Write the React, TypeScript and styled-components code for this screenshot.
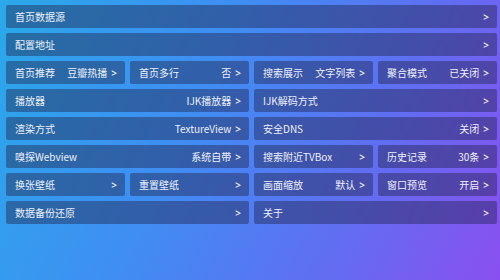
import React from "react";
import styled, { createGlobalStyle } from "styled-components";

const Global = createGlobalStyle`
  html, body { margin: 0; padding: 0; }
  body {
    width: 500px;
    height: 280px;
    overflow: hidden;
    font-family: "Noto Sans CJK SC", "Noto Sans", sans-serif;
  }
`;

const Screen = styled.div`
  width: 500px;
  height: 280px;
  box-sizing: border-box;
  padding: 5px 3px 0 6px;
  background: linear-gradient(115deg, #2aa9e9 0%, #3f8ef3 38%, #5f6ff2 70%, #8a4ff0 100%);
`;

const Grid = styled.div`
  display: grid;
  grid-template-columns: repeat(4, 1fr);
  grid-auto-rows: 23px;
  gap: 5px;
`;

const Cell = styled.div<{ $span: number }>`
  grid-column: span ${(p) => p.$span};
  display: flex;
  align-items: center;
  padding: 0 8px 0 9px;
  background: rgba(30, 32, 70, 0.42);
  border-radius: 2px;
  color: #eef0fa;
  font-size: 10px;
  line-height: 1;
  white-space: nowrap;
`;

const Label = styled.span`
  flex: 1;
`;

const Value = styled.span`
  margin-right: 4px;
`;

const Arrow = styled.span`
  font-family: "Noto Sans", sans-serif;
  font-size: 10px;
  font-weight: 600;
`;

type Item = { label: string; value?: string; span: number };

const items: Item[] = [
  { label: "首页数据源", span: 4 },
  { label: "配置地址", span: 4 },
  { label: "首页推荐", value: "豆瓣热播", span: 1 },
  { label: "首页多行", value: "否", span: 1 },
  { label: "搜索展示", value: "文字列表", span: 1 },
  { label: "聚合模式", value: "已关闭", span: 1 },
  { label: "播放器", value: "IJK播放器", span: 2 },
  { label: "IJK解码方式", span: 2 },
  { label: "渲染方式", value: "TextureView", span: 2 },
  { label: "安全DNS", value: "关闭", span: 2 },
  { label: "嗅探Webview", value: "系统自带", span: 2 },
  { label: "搜索附近TVBox", span: 1 },
  { label: "历史记录", value: "30条", span: 1 },
  { label: "换张壁纸", span: 1 },
  { label: "重置壁纸", span: 1 },
  { label: "画面缩放", value: "默认", span: 1 },
  { label: "窗口预览", value: "开启", span: 1 },
  { label: "数据备份还原", span: 2 },
  { label: "关于", span: 2 },
];

export default function App() {
  return (
    <>
      <Global />
      <Screen>
        <Grid>
          {items.map((it, i) => (
            <Cell key={i} $span={it.span}>
              <Label>{it.label}</Label>
              {it.value && <Value>{it.value}</Value>}
              <Arrow>&gt;</Arrow>
            </Cell>
          ))}
        </Grid>
      </Screen>
    </>
  );
}
